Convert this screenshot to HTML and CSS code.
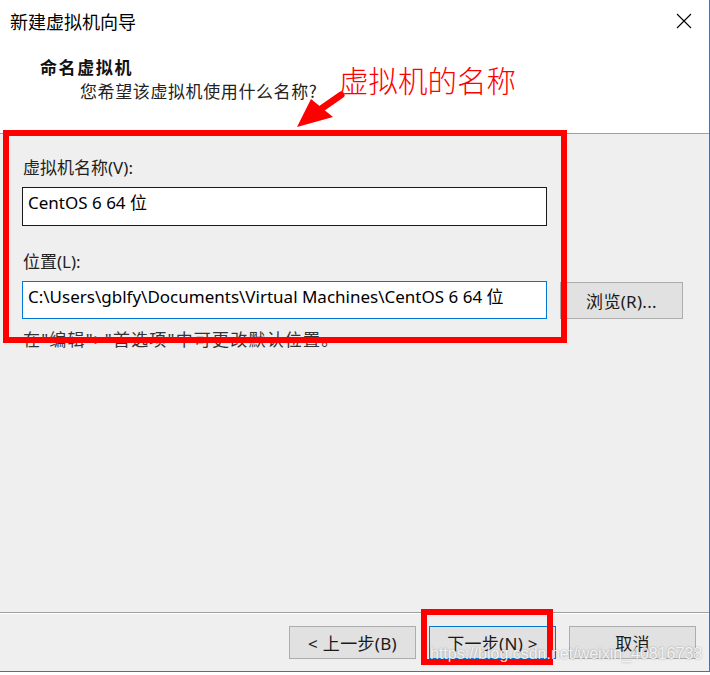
FILE: index.html
```html
<!DOCTYPE html>
<html lang="zh-CN">

<head>
    <meta charset="UTF-8">
    <title>新建虚拟机向导</title>
    <link rel="stylesheet" href="styles.css">
</head>

<body>
    <div class="window">
        <div class="top">
            <div class="titlebar">
                <span class="title">新建虚拟机向导</span>
                <svg class="close" width="16" height="16" viewBox="0 0 16 16">
                    <path d="M1 1 L15 15 M15 1 L1 15" stroke="#000" stroke-width="1.1" fill="none" />
                </svg>
            </div>
            <div class="heading">命名虚拟机</div>
            <div class="subheading">您希望该虚拟机使用什么名称?</div>
        </div>

        <div class="content">
            <div class="label">虚拟机名称(V):</div>
            <div class="field">CentOS 6 64 位</div>

            <div class="label second">位置(L):</div>
            <div class="row">
                <div class="field focused">C:\Users\gblfy\Documents\Virtual Machines\CentOS 6 64 位</div>
                <div class="btn browse">浏览(R)...</div>
            </div>
            <div class="note">在"编辑"&gt;"首选项"中可更改默认位置。</div>
        </div>

        <div class="footer">
            <div class="btn">&lt; 上一步(B)</div>
            <div class="btn primary">下一步(N) &gt;</div>
            <div class="btn">取消</div>
        </div>

        <!-- annotations drawn over the dialog -->
        <div class="mark mark-fields"></div>
        <div class="mark mark-next"></div>
        <div class="callout">虚拟机的名称</div>
        <svg class="arrow" width="710" height="675" viewBox="0 0 710 675">
            <polygon points="297,127 311,99 333,117" fill="#ff0000" />
            <line x1="318" y1="111" x2="341" y2="95" stroke="#ff0000" stroke-width="7" stroke-linecap="round" />
        </svg>
        <div class="watermark">https://blog.csdn.net/weixin_40816738</div>
    </div>
</body>

</html>
```

FILE: styles.css
```css
* {
    margin: 0;
    padding: 0;
    box-sizing: border-box;
}

html,
body {
    background-color: #ffffff;
    width: 710px;
    height: 675px;
    overflow: hidden;
}

.window {
    position: relative;
    width: 710px;
    height: 672px;
    display: flex;
    flex-direction: column;
    background-color: #efefef;
    border-right: 1px solid #2b79c9;
    border-bottom: 1px solid #2b79c9;
    font-family: "Noto Sans", "Noto Sans CJK SC", sans-serif;
    color: #1e1e1e;
}

/* header */
.top {
    background-color: #ffffff;
    height: 134px;
    border-bottom: 1px solid #a0a0a0;
}

.titlebar {
    display: flex;
    justify-content: space-between;
    align-items: center;
    height: 42px;
    padding: 0 17px 0 10px;
}

.title {
    font-family: "Noto Sans CJK SC", sans-serif;
    font-size: 18px;
    color: #000;
    margin-top: -1px;
}

.heading {
    font-family: "Noto Sans CJK SC", sans-serif;
    font-weight: bold;
    font-size: 17px;
    letter-spacing: 1.6px;
    line-height: 20px;
    margin: 15px 0 0 40px;
    color: #111;
}

.subheading {
    font-family: "Noto Sans CJK SC", sans-serif;
    font-size: 17px;
    letter-spacing: 0.6px;
    line-height: 20px;
    margin: 4px 0 0 80px;
    color: #222;
}

/* form */
.content {
    flex: 1;
    padding: 23px 0 0 22px;
}

.label {
    font-size: 17px;
    line-height: 22px;
    padding-left: 1px;
    color: #222;
}

.label.second {
    margin-top: 25px;
}

.field {
    width: 525px;
    height: 39px;
    margin-top: 8px;
    padding: 2px 0 0 5px;
    background-color: #ffffff;
    border: 1px solid #1a1a1a;
    font-size: 17px;
    line-height: 26px;
    color: #000;
    white-space: nowrap;
}

.row {
    display: flex;
    align-items: flex-start;
    gap: 13px;
    margin-top: 8px;
}

.row .field {
    margin-top: 0;
    height: 38px;
}

.field.focused {
    border-color: #0078d7;
}

.btn {
    display: flex;
    align-items: center;
    justify-content: center;
    width: 127px;
    height: 33px;
    background-color: #e1e1e1;
    border: 1px solid #adadad;
    font-size: 17px;
    letter-spacing: 0.3px;
    color: #1a1a1a;
}

.btn.browse {
    width: 123px;
    height: 37px;
    margin-top: 1px;
}

.btn.primary {
    border-color: #0078d7;
}

.note {
    font-family: "Noto Sans", "Noto Sans CJK SC", sans-serif;
    font-size: 17px;
    letter-spacing: 1.2px;
    line-height: 20px;
    margin-top: 11px;
    padding-left: 1px;
    color: #333;
}

/* footer */
.footer {
    height: 59px;
    border-top: 1px solid #a0a0a0;
    box-shadow: inset 0 1px 0 #ffffff;
    display: flex;
    justify-content: flex-end;
    gap: 13px;
    padding: 13px 13px 0 0;
}

/* annotations */
.mark {
    position: absolute;
    border: 6px solid #ff0000;
}

.mark-fields {
    left: 3px;
    top: 130px;
    width: 564px;
    height: 213px;
}

.mark-next {
    left: 421px;
    top: 609px;
    width: 132px;
    height: 56px;
}

.callout {
    position: absolute;
    left: 339px;
    top: 60px;
    font-family: "Noto Sans CJK SC", sans-serif;
    font-weight: 300;
    font-size: 29.5px;
    line-height: 38px;
    color: #ff0000;
}

.arrow {
    position: absolute;
    left: 0;
    top: 0;
    pointer-events: none;
}

.watermark {
    position: absolute;
    left: 430px;
    top: 645px;
    font-family: "Liberation Sans", sans-serif;
    font-size: 16px;
    line-height: 18px;
    color: rgba(255, 255, 255, 0.85);
    text-shadow: 0 0 2px rgba(0, 0, 0, 0.35);
}
```
